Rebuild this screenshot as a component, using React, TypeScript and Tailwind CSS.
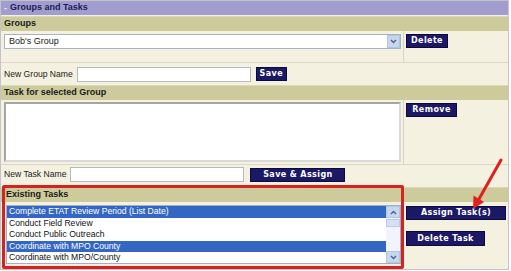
import React from 'react';

const tasks = [
  { name: 'Complete ETAT Review Period (List Date)', selected: true },
  { name: 'Conduct Field Review', selected: false },
  { name: 'Conduct Public Outreach', selected: false },
  { name: 'Coordinate with MPO County', selected: true },
  { name: 'Coordinate with MPO/County', selected: false },
];

function NavyButton({ label, className }: { label: string; className: string }) {
  return (
    <button
      className={`flex items-center justify-center bg-[#1b1866] border border-[#0c0a3a] text-white font-bold text-[8px] tracking-[0.4px] font-['DejaVu_Sans',sans-serif] ${className}`}
    >
      {label}
    </button>
  );
}

function Chevron({ up }: { up?: boolean }) {
  return (
    <svg width="7" height="5" viewBox="0 0 7 5">
      <path
        d={up ? 'M1 4 L3.5 1.5 L6 4' : 'M1 1 L3.5 3.5 L6 1'}
        fill="none"
        stroke="#4d6185"
        strokeWidth="1.4"
      />
    </svg>
  );
}

export default function App() {
  return (
    <div className="relative w-[511px] h-[271px] bg-white font-['Liberation_Sans',Arial,sans-serif] text-[8.6px] text-[#1a1a1a]">
      <div className="w-[509px] h-[270px] border border-[#c4c2cf] bg-[#f5f1e0] flex flex-col">
        {/* Title */}
        <div className="h-[14px] bg-[#a19ecf] flex items-center pl-[1px] font-bold text-[9px] text-[#1c1b58]">
          <span className="w-[7px] h-[8px] mr-[1px] flex items-center justify-center text-[#e8e6f4] text-[9px] leading-none">
            -
          </span>
          Groups and Tasks
        </div>

        {/* Groups */}
        <div className="h-[15px] mt-[1px] bg-[#cdca9b] border-t border-[#dcd9b4] flex items-center px-[3px] font-bold text-[9px]">
          Groups
        </div>
        <div className="h-[31px] flex">
          <div className="w-[402px] pl-[3px] pt-[3px]">
            <div className="w-[397px] h-[15px] bg-white border border-[#a8b3c2] flex items-center">
              <span className="flex-1 pl-[4px] text-[9px]">Bob's Group</span>
              <div className="w-[13px] h-[13px] bg-[#c7d6ef] border border-[#b4c4e0] flex items-center justify-center">
                <Chevron />
              </div>
            </div>
          </div>
          <div className="flex-1 border-l border-[#d8d4c2] pl-[2px] pt-[3px]">
            <NavyButton label="Delete" className="w-[42px] h-[14px]" />
          </div>
        </div>
        <div className="h-[23px] border-t border-[#dcd8c8] flex items-center pl-[3px]">
          <span>New Group Name</span>
          <div className="ml-[4px] w-[174px] h-[15px] bg-white border border-[#b3bac4]" />
          <NavyButton label="Save" className="ml-[5px] w-[31px] h-[14px]" />
        </div>

        {/* Task for selected Group */}
        <div className="h-[15px] bg-[#cdca9b] border-t border-[#dcd9b4] flex items-center px-[3px] font-bold text-[9px]">
          Task for selected Group
        </div>
        <div className="h-[64px] flex">
          <div className="w-[402px] pl-[3px] pt-[2px]">
            <div className="w-[397px] h-[60px] bg-white border-2 border-t-[#a6a6a6] border-l-[#a6a6a6] border-b-[#d9d9d9] border-r-[#d9d9d9]" />
          </div>
          <div className="flex-1 border-l border-[#d8d4c2] pl-[2px] pt-[3px]">
            <NavyButton label="Remove" className="w-[51px] h-[14px]" />
          </div>
        </div>
        <div className="h-[20px] border-t border-[#dcd8c8] flex items-center pl-[3px]">
          <span>New Task Name</span>
          <div className="ml-[4px] w-[174px] h-[15px] bg-white border border-[#b3bac4]" />
          <NavyButton label="Save & Assign" className="ml-[6px] w-[95px] h-[14px]" />
        </div>

        {/* Existing Tasks */}
        <div className="h-[15px] mt-[3px] bg-[#cdca9b] border-t border-[#dcd9b4] flex items-center px-[5px] font-bold text-[9px]">
          Existing Tasks
        </div>
        <div className="flex-1 flex">
          <div className="w-[402px] pl-[5px] pt-[3px]">
            <div className="w-[395px] h-[59px] bg-white border border-[#9fb0c8] flex">
              <div className="flex-1">
                {tasks.map((t) => (
                  <div
                    key={t.name}
                    className={`h-[11.6px] leading-[11.6px] pl-[2px] ${
                      t.selected ? 'bg-[#3467c4] text-white' : 'text-[#111]'
                    }`}
                  >
                    {t.name}
                  </div>
                ))}
              </div>
              <div className="w-[14px] bg-[#f1f5fb] flex flex-col">
                <div className="h-[12px] bg-[#c8d7f0] border border-[#b4c5e2] flex items-center justify-center">
                  <Chevron up />
                </div>
                <div className="h-[8px] mt-[1px] bg-[#d4e0f4] border border-[#bccbe6]" />
                <div className="flex-1" />
                <div className="h-[12px] bg-[#c8d7f0] border border-[#b4c5e2] flex items-center justify-center">
                  <Chevron />
                </div>
              </div>
            </div>
          </div>
          <div className="flex-1 pl-[3px] pt-[4px] flex flex-col items-start">
            <NavyButton label="Assign Task(s)" className="w-[100px] h-[14px]" />
            <NavyButton label="Delete Task" className="mt-[11px] w-[79px] h-[15px]" />
          </div>
        </div>
      </div>

      {/* red annotation box */}
      <div className="absolute left-[2px] top-[185px] w-[402px] h-[84px] border-[3px] border-[#d7231f] rounded-[2px]" />

      {/* red arrow */}
      <svg className="absolute left-0 top-0" width="511" height="271" viewBox="0 0 511 271">
        <line x1="501" y1="160" x2="479" y2="199" stroke="#e0201c" strokeWidth="3" strokeLinecap="round" />
        <polygon points="473,209 484,202 473.5,195.5" fill="#e0201c" />
      </svg>
    </div>
  );
}
